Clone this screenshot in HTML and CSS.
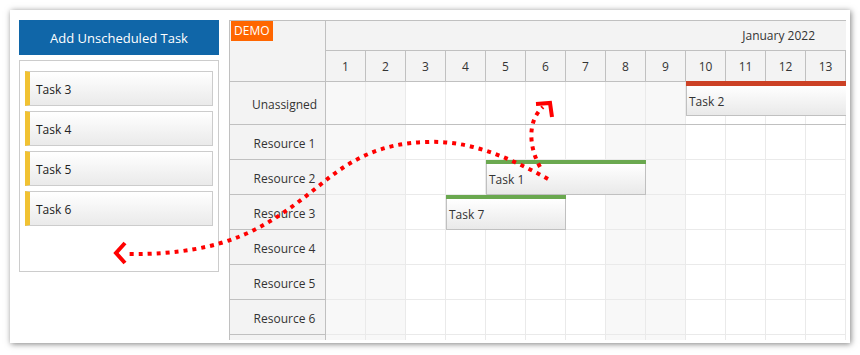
FILE: index.html
```html
<!DOCTYPE html>
<html lang="en">
<head>
    <title>Scheduler - Unscheduled Tasks</title>
    <link rel="stylesheet" href="styles.css">
</head>
<body>
    <div class="page">
        <div class="card">
            <!-- Unscheduled task queue -->
            <aside class="queue">
                <button class="add-button">Add Unscheduled Task</button>
                <div class="queue-list">
                    <div class="queue-item">Task 3</div>
                    <div class="queue-item">Task 4</div>
                    <div class="queue-item">Task 5</div>
                    <div class="queue-item">Task 6</div>
                </div>
            </aside>

            <!-- Scheduler -->
            <section class="scheduler">
                <div class="row-headers">
                    <div class="corner"><span class="demo">DEMO</span></div>
                    <div class="row-header unassigned">Unassigned</div>
                    <div class="row-header">Resource 1</div>
                    <div class="row-header">Resource 2</div>
                    <div class="row-header">Resource 3</div>
                    <div class="row-header">Resource 4</div>
                    <div class="row-header">Resource 5</div>
                    <div class="row-header">Resource 6</div>
                    <div class="row-header"></div>
                </div>
                <div class="timeline">
                    <div class="month">January 2022</div>
                    <div class="days" id="days"></div>
                    <div class="grid" id="grid">
                        <div class="event" style="top: -1px; left: 360px; width: 200px;">
                            <div class="event-bar red"></div>
                            <div class="event-box">Task 2</div>
                        </div>
                        <div class="event" style="top: 78px; left: 160px; width: 160px;">
                            <div class="event-bar green"></div>
                            <div class="event-box">Task 1</div>
                        </div>
                        <div class="event" style="top: 113px; left: 120px; width: 120px;">
                            <div class="event-bar green"></div>
                            <div class="event-box">Task 7</div>
                        </div>
                    </div>
                </div>
            </section>
        </div>

        <!-- drag hints -->
        <svg class="arrows" viewBox="0 0 860 355" width="860" height="355">
            <path class="dots" d="M548,179 C510,158 470,140 427,142 C380,143 350,160 320,185 C270,225 230,255 128,254"/>
            <path class="head" d="M125,243 L116,253 L125,263"/>
            <path class="dots" d="M540,167 C528,145 528,120 543,107"/>
            <path class="head" d="M536,104 L550,103 L552,117"/>
        </svg>
    </div>

    <script>
        // Build day header and grid cells
        const weekend = [1, 2, 8, 9];
        const days = document.getElementById('days');
        const grid = document.getElementById('grid');

        for (let d = 1; d <= 13; d++) {
            days.insertAdjacentHTML('beforeend', `<div class="day">${d}</div>`);
        }

        const rows = ['unassigned', '', '', '', '', '', '', ''];
        rows.forEach(cls => {
            let cells = '';
            for (let d = 1; d <= 13; d++) {
                cells += `<div class="cell ${weekend.includes(d) ? 'weekend' : ''}"></div>`;
            }
            const row = document.createElement('div');
            row.className = 'grid-row ' + cls;
            row.innerHTML = cells;
            grid.insertBefore(row, grid.querySelector('.event'));
        });
    </script>
</body>
</html>
```

FILE: styles.css
```css
body {
    margin: 0;
    font-family: 'Open Sans', sans-serif;
    font-size: 12px;
    color: #333333;
    background: #ffffff;
}

.page {
    position: relative;
    width: 860px;
    height: 355px;
}

.card {
    position: relative;
    top: 10px;
    left: 10px;
    width: 840px;
    height: 333px;
    box-sizing: border-box;
    padding: 10px 4px 0 9px;
    display: flex;
    gap: 10px;
    background: #ffffff;
    box-shadow: 1px 1px 6px rgba(0, 0, 0, 0.5);
}

.queue {
    width: 200px;
    flex-shrink: 0;
}

.add-button {
    display: block;
    width: 200px;
    height: 35px;
    border: none;
    padding-top: 2px;
    background-color: #1066a8;
    color: white;
    font-family: 'Open Sans', sans-serif;
    font-size: 13px;
}

.queue-list {
    margin-top: 5px;
    height: 212px;
    box-sizing: border-box;
    border: 1px solid #cccccc;
    padding: 10px 5px;
    display: flex;
    flex-direction: column;
    gap: 5px;
}

.queue-item {
    height: 35px;
    box-sizing: border-box;
    border: 1px solid #cccccc;
    border-left: 5px solid #f1c232;
    padding-left: 6px;
    padding-top: 2px;
    display: flex;
    align-items: center;
    background: linear-gradient(#ffffff, #eaeaea);
    color: #222222;
}

.scheduler {
    width: 617px;
    height: 320px;
    flex-shrink: 0;
    box-sizing: border-box;
    border-top: 1px solid #c0c0c0;
    border-left: 1px solid #c0c0c0;
    display: flex;
    overflow: hidden;
}

.row-headers {
    width: 96px;
    flex-shrink: 0;
    border-right: 1px solid #c0c0c0;
    box-sizing: border-box;
    background: #f3f3f3;
}

.corner {
    height: 61px;
    box-sizing: border-box;
    border-bottom: 1px solid #c0c0c0;
}

.demo {
    display: inline-block;
    margin-left: 1px;
    padding: 0 3px;
    height: 20px;
    line-height: 20px;
    background: #ff6600;
    color: white;
    font-size: 12px;
}

.row-header {
    height: 35px;
    box-sizing: border-box;
    border-bottom: 1px solid #c0c0c0;
    padding-left: 14px;
    padding-top: 3px;
    display: flex;
    align-items: center;
    justify-content: center;
}

.row-header.unassigned {
    height: 43px;
}

.timeline {
    width: 520px;
    flex-shrink: 0;
}

.month {
    height: 30px;
    box-sizing: border-box;
    border-bottom: 1px solid #c0c0c0;
    background: #f3f3f3;
    text-align: right;
    padding-right: 31px;
    line-height: 29px;
}

.days {
    display: flex;
    height: 31px;
    box-sizing: border-box;
    border-bottom: 1px solid #c0c0c0;
    background: #f3f3f3;
}

.day {
    width: 40px;
    box-sizing: border-box;
    border-right: 1px solid #c0c0c0;
    text-align: center;
    line-height: 32px;
}

.grid {
    position: relative;
}

.grid-row {
    display: flex;
    height: 35px;
    box-sizing: border-box;
    border-bottom: 1px solid #eaeaea;
}

.grid-row.unassigned {
    height: 43px;
    border-bottom-color: #c0c0c0;
}

.cell {
    width: 40px;
    box-sizing: border-box;
    border-right: 1px solid #eaeaea;
}

.cell.weekend {
    background: #f8f8f8;
}

.event {
    position: absolute;
    height: 35px;
    display: flex;
    flex-direction: column;
}

.event-bar {
    height: 4px;
}

.event-bar.red {
    background: #cc4125;
    height: 5px;
}

.event-bar.green {
    background: #6aa84f;
}

.event-box {
    flex: 1;
    box-sizing: border-box;
    border: 1px solid #c0c0c0;
    border-top: none;
    padding-left: 2px;
    padding-top: 1px;
    display: flex;
    align-items: center;
    background: linear-gradient(#ffffff, #e9e9e9);
    color: #333333;
}

.arrows {
    position: absolute;
    top: 0;
    left: 0;
    pointer-events: none;
}

.dots {
    fill: none;
    stroke: #ff0000;
    stroke-width: 4;
    stroke-dasharray: 4 5;
}

.head {
    fill: none;
    stroke: #ff0000;
    stroke-width: 4;
}
```
